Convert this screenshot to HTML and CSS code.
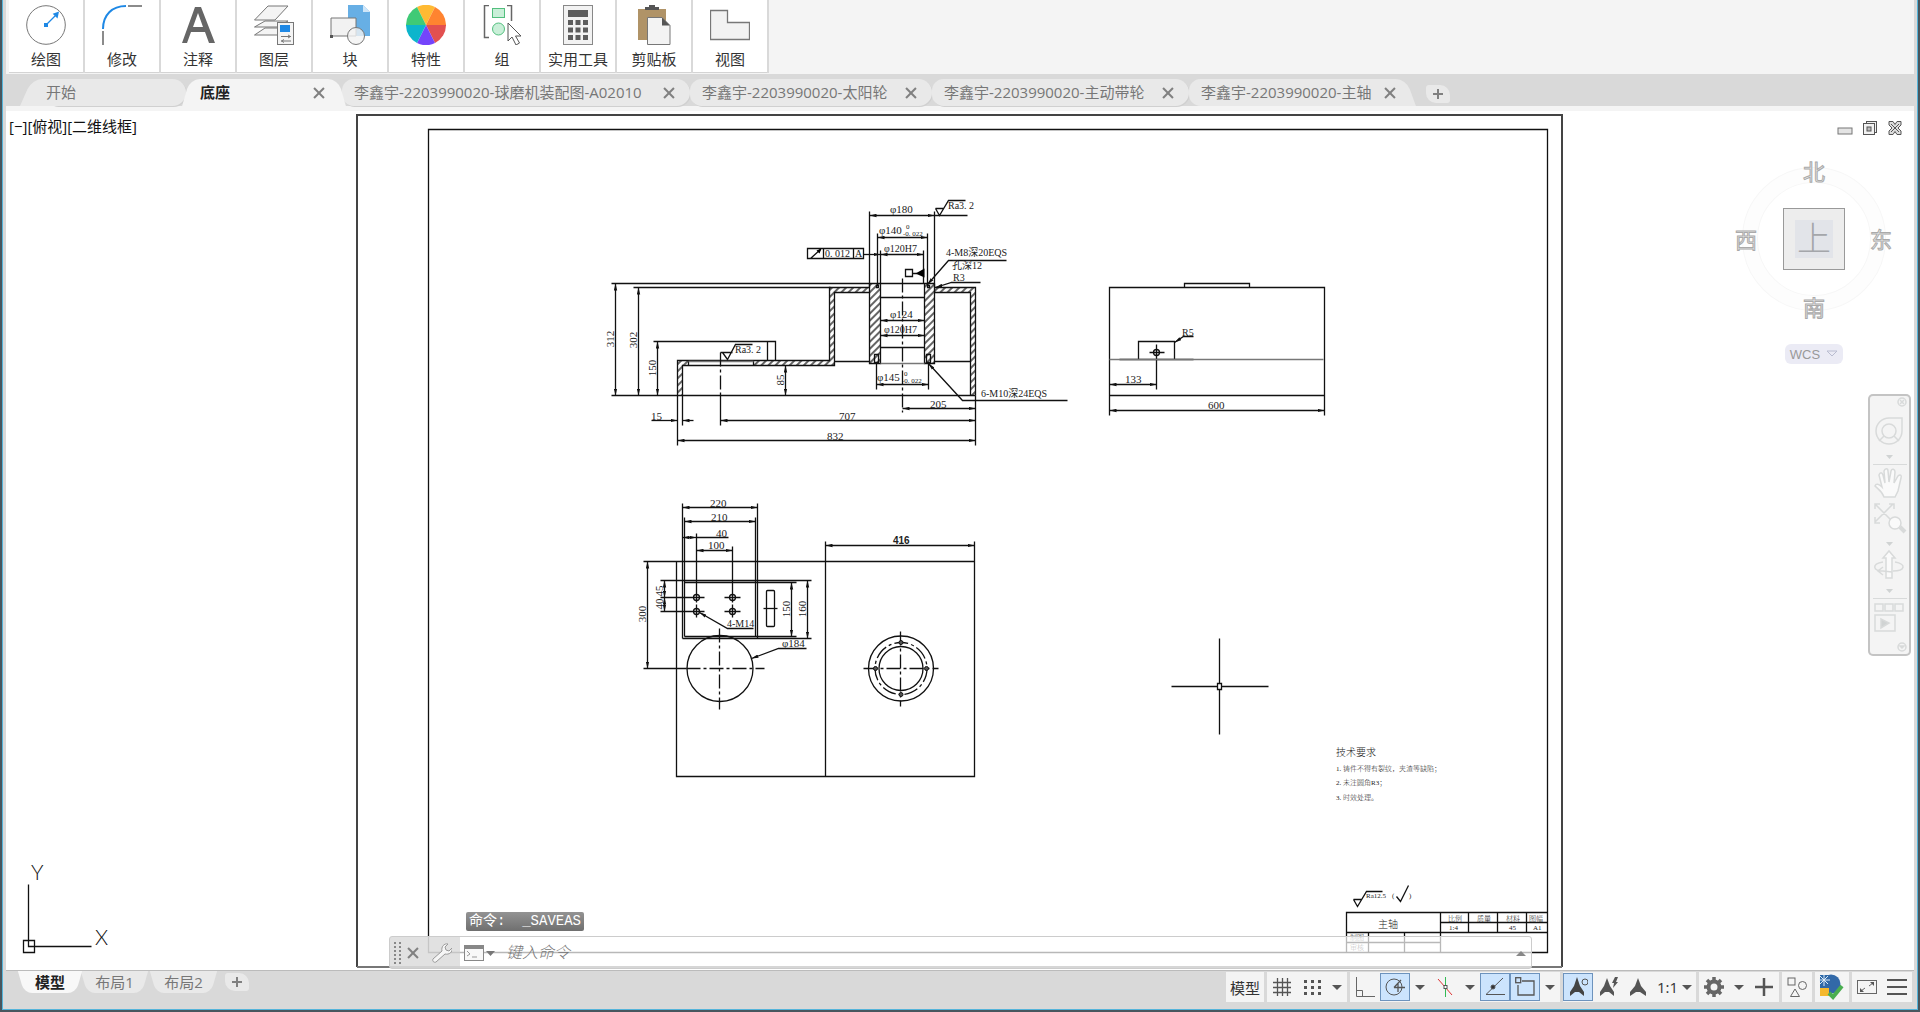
FILE: index.html
```html
<!DOCTYPE html>
<html lang="zh-CN">
<head>
  <meta charset="utf-8">
  <meta name="viewport" content="width=device-width">
  <title>底座</title>
  <link rel="stylesheet" href="styles.css">
</head>
<body>
<div class="window">

  <!-- ribbon -->
  <header class="ribbon">
    <button class="panel">
      <svg width="40" height="40" viewBox="0 0 40 40"><circle cx="20" cy="20" r="19.3" fill="#fff" stroke="#777"/><path d="M20 20L30 10" stroke="#1e88e5" stroke-width="1.3"/><path d="M33 6.5l-1.5 7-4.800-4.800z" fill="#1e88e5"/><rect x="18" y="18" width="4" height="4" fill="#1e88e5"/></svg>
      <span>绘图</span>
    </button>
    <button class="panel">
      <svg width="40" height="40" viewBox="0 0 40 40"><path d="M1 24C1 10 10 1 24 1" fill="none" stroke="#1e88e5" stroke-width="2"/><path d="M1 26v14M26 1h14" stroke="#666" stroke-width="1.500"/></svg>
      <span>修改</span>
    </button>
    <button class="panel">
      <svg width="40" height="40" viewBox="0 0 40 40"><path d="M17 2h6l14 36h-6l-4-11H13L9 38H4zM20 8l-5 14h10z" fill="#666" fill-rule="evenodd"/></svg>
      <span>注释</span>
    </button>
    <button class="panel">
      <svg width="40" height="40" viewBox="0 0 40 40" fill="#f4f4f4" stroke="#777"><path d="M11 23h23L23 30H.500zM11 16h23L23 22H.500z"/><path d="M14 1h20L21 15H.500z"/><rect x="23.500" y="17.500" width="16" height="22"/><rect x="26" y="20" width="10" height="7" fill="#1e88e5" stroke="none"/><path d="M27 31.500h10M27 36h10M34 30l2.500 1.500L34 33M30 34.500L27.500 36l2.500 1.500" fill="none"/></svg>
      <span>图层</span>
    </button>
    <button class="panel">
      <svg width="40" height="40" viewBox="0 0 40 40"><path d="M18 0h15l7 7v24H18z" fill="#67afe5"/><path d="M33 0v7h7z" fill="#cfe6f8"/><path d="M1 13h25v18H1z" fill="#f2f2f2" stroke="#777"/><path d="M0 30h3v3H0z" fill="#555"/><circle cx="26" cy="31" r="8.500" fill="#f2f2f2" fill-opacity=".8" stroke="#777"/></svg>
      <span>块</span>
    </button>
    <button class="panel">
      <svg width="40" height="40" viewBox="0 0 40 40"><path d="M20 20L11 2A20 20 0 0 1 29 2z" fill="#ffba33"/><path d="M20 20l9-18A20 20 0 0 1 40 20z" fill="#ff8430"/><path d="M20 20h20a20 20 0 0 1-11 18z" fill="#e25050"/><path d="M20 20l9 18a20 20 0 0 1-18 0z" fill="#7444fb"/><path d="M20 20l-9 18A20 20 0 0 1 0 20z" fill="#0db5cc"/><path d="M20 20H0A20 20 0 0 1 11 2z" fill="#3fca76"/></svg>
      <span>特性</span>
    </button>
    <button class="panel">
      <svg width="40" height="40" viewBox="0 0 40 40" fill="none"><path d="M7 .500H2.500v32H7M25 .500h4.500V16" stroke="#666" stroke-width="1.500"/><g fill="#c9efd8" stroke="#52bf7e"><rect x="10.500" y="3.500" width="12" height="9"/><circle cx="16.500" cy="24" r="6"/></g><path d="M26 18v18l4-4 4 8 3.500-2-4-7H39z" fill="#fff" stroke="#555"/></svg>
      <span>组</span>
    </button>
    <button class="panel">
      <svg width="40" height="40" viewBox="0 0 40 40" fill="#5c5c5c"><rect x="5.500" y=".500" width="29" height="39" fill="#f2f2f2" stroke="#888"/><path d="M10 5h20v7H10zM10 15h5v5h-5zM17.500 15h5v5h-5zM25 15h5v5h-5zM10 22.500h5v5h-5zM17.500 22.500h5v5h-5zM25 22.500h5v5h-5zM10 30h5v5h-5zM17.500 30h5v5h-5zM25 30h5v5h-5z"/></svg>
      <span>实用工具</span>
    </button>
    <button class="panel">
      <svg width="40" height="40" viewBox="0 0 40 40"><path d="M4 4h28v31H4z" fill="#b09367"/><path d="M11 5V2h4V0h6v2h4v3z" fill="#555"/><path d="M13.500 12.500H28l8 8v19H13.500z" fill="#f3f3f3" stroke="#777"/><path d="M28 12.500v8h8z" fill="#555"/></svg>
      <span>剪贴板</span>
    </button>
    <button class="panel">
      <svg width="40" height="40" viewBox="0 0 40 40"><path d="M.500 5.500h17v12h22v17H.500z" fill="#f2f2f2" stroke="#777" stroke-width="1.300"/></svg>
      <span>视图</span>
    </button>
  </header>

  <!-- document tabs -->
  <nav class="file-tabs">
    <div class="tab tab-start"><span>开始</span></div>
    <div class="tab tab-active"><span>底座</span><button class="close" aria-label="关闭"></button></div>
    <div class="tab tab-wide"><span>李鑫宇-2203990020-球磨机装配图-A02010</span><button class="close" aria-label="关闭"></button></div>
    <div class="tab tab-sun"><span>李鑫宇-2203990020-太阳轮</span><button class="close" aria-label="关闭"></button></div>
    <div class="tab tab-wheel"><span>李鑫宇-2203990020-主动带轮</span><button class="close" aria-label="关闭"></button></div>
    <div class="tab tab-shaft"><span>李鑫宇-2203990020-主轴</span><button class="close" aria-label="关闭"></button></div>
    <button class="tab-add" aria-label="新图形"></button>
  </nav>

  <!-- model space -->
  <main class="canvas">
    <svg class="drawing" viewBox="6 111 1908 859">
      <defs>
        <marker id="arrow" viewBox="0 0 7 4" markerWidth="7" markerHeight="4" markerUnits="userSpaceOnUse" refX="7" refY="2" orient="auto-start-reverse"><path d="M0 .3L7 2 0 3.700z" fill="#111"/></marker>
        <pattern id="hatch" width="5" height="5" patternUnits="userSpaceOnUse" patternTransform="rotate(45)"><path d="M1 0v5" stroke="#111" stroke-width="1.300"/></pattern>
      </defs>

      <!-- sheet border -->
      <path class="border" d="M357 967V115H1562V967"/>
      <path class="border border-low" d="M357 967H1562"/>

      <g transform="translate(.5 .5)">
        <path class="ln" d="M428 129H1547V952H428z"/>

        <!-- section view -->
        <path class="ln" d="M611 283H934M633 287H830M611 395H975M653 341H775V360M767 341V360"/>
        <path fill="url(#hatch)" d="M677 360H688V365H682V395H677zM753 360H829V287H869V283H880V363H869V292H834V365H753zM924 283H934V287H975V395H970V292H934V363H924z"/>
        <path class="ln" d="M677 395V360H829V287H869V363H880V283M682 395V365H834V292H869M688 360V365M753 360V365M869 283V287M924 283V363H934V283M934 287H975V395M970 395V292H934M834 361H869M934 361H970M880 297H924M880 347H924"/>
        <path class="ln soft" d="M880 363H924M688 361H753"/>
        <path class="ln" d="M874 354h4v8h-4zM926 354h4v8h-4zM876 285h2v2h-2zM927 285h2v2h-2z"/>
        <path class="ln center" d="M902 278V412"/>
        <path class="ln center" d="M720 352V395"/>
        <path class="ln" d="M869 211V287M934 211V287M877 233V285M927 233V285M880 250V283M923 250V283M876 363V389M928 363V389M677 395V445M682 395V425M720 395V425M975 395V445M934 215H967"/>
        <path class="dim" d="M869 215H934"/>
        <path class="dim" d="M877 237H927"/>
        <path class="dim" d="M880 254H923"/>
        <path class="dim" d="M880 320H924"/>
        <path class="dim" d="M880 335H924"/>
        <path class="dim" d="M876 384H928"/>
        <path class="dim" d="M902 408H975"/>
        <path class="dim" d="M720 420H975"/>
        <path class="dim" d="M677 440H975"/>
        <path class="dim" d="M615 283V395"/>
        <path class="dim" d="M638 287V395"/>
        <path class="dim" d="M657 341V395"/>
        <path class="dim" d="M785 365V395"/>
        <path class="lead" d="M651 420H677"/>
        <path class="lead" d="M693 420H682"/>
        <path class="lead" d="M863 254H880"/>
        <path class="lead" d="M1006 260H948L927 284"/>
        <path class="lead" d="M980 282H951L935 287"/>
        <path class="lead" d="M1067 400H962L928 363"/>
        <path class="ln" d="M807 248H863V258H807zM823 248V258M853 248V258M810 258L820 249M905 269h7v7h-7zM912 273h5"/>
        <path d="M924 268V277L915 273zM821 248l-5 2 3 3z"/>
        <path class="ln" d="M720 352H732M722 352L727 359 735 344H752M935 208H943M935 208L939 215 948 200H965"/>

        <!-- side view -->
        <path class="ln" d="M1109 415V287H1324V415M1109 395H1324M1184 287V283H1249V287M1138 359V341H1174V359M1119 359H1193M1156 344V389M1149 352H1164"/>
        <path class="ln soft" d="M1109 359H1323"/>
        <circle class="ln" cx="1156" cy="352" r="3"/>
        <path class="dim" d="M1109 384H1156"/>
        <path class="dim" d="M1109 410H1324"/>
        <path class="lead" d="M1193 336H1183L1174 342"/>

        <!-- plan view -->
        <path class="ln" d="M676 561H974V776H676zM825 541V776M974 541V561M682 503V638M757 503V638M684 517V636M755 517V636M696 533V602M732 546V602M660 580H811M684 582H796M684 636H796M682 638H811M660 597H704M660 611H704M724 597H740M724 611H740M696 604V617M732 604V617M643 561H676M643 668H686"/>
        <rect class="ln" x="766" y="590" width="8" height="36" rx="1"/>
        <path class="ln center" d="M763 608H779"/>
        <path class="dim" d="M682 507H757"/>
        <path class="dim" d="M684 521H755"/>
        <path class="dim" d="M682 537H696"/>
        <path class="ln" d="M696 537H728"/>
        <path class="dim" d="M696 550H732"/>
        <path class="dim" d="M825 545H974"/>
        <path class="dim" d="M647 561V668"/>
        <path class="dim" d="M664 580V597"/>
        <path class="dim" d="M664 597V611"/>
        <path class="dim" d="M791 582V636"/>
        <path class="dim" d="M807 580V638"/>
        <path class="lead" d="M753 628H727L699 612"/>
        <path class="lead" d="M806 648H778L751 658"/>
        <g class="ln">
          <circle cx="696" cy="597" r="3"/><circle cx="732" cy="597" r="3"/>
          <circle cx="696" cy="611" r="3"/><circle cx="732" cy="611" r="3"/>
          <circle cx="719.500" cy="668" r="33"/>
          <circle cx="900.500" cy="668" r="32.500"/><circle cx="900.500" cy="668" r="22"/>
        </g>
        <circle class="ln center" cx="900.500" cy="668" r="26"/>
        <path class="ln center" d="M686 668H764M719 628V709M863 668H938M900 631V706"/>
        <g class="hole">
          <circle cx="900.500" cy="642" r="2"/><circle cx="900.500" cy="694" r="2"/>
          <circle cx="875" cy="668" r="2"/><circle cx="926" cy="668" r="2"/>
        </g>

        <!-- cursor -->
        <path class="ln" d="M1171 686H1217M1221 686H1268M1219 638V683M1219 689V734M1217 683h4v6h-4z"/>

        <!-- title block -->
        <path class="ln" d="M1346 952V912H1547M1346 932H1547M1440 922H1547M1440 912V952M1468 912V932M1497 912V932M1526 912V932M1346 942H1440M1368 932V952M1404 932V952"/>
        <path class="ln" d="M1353 899H1361M1353 899L1357 906 1366 891H1382M1396 896L1400 901 1408 885"/>

        <!-- UCS -->
        <path class="ln" d="M28 884V946H91M23 940h11v12h-11z"/>
      </g>

      <g class="note">
        <text x="890" y="213">φ180</text>
        <text x="879" y="234">φ140</text>
        <text x="884" y="252" class="narrow">φ120H7</text>
        <text x="890" y="318">φ124</text>
        <text x="884" y="333" class="narrow">φ120H7</text>
        <text x="877" y="381">φ145</text>
        <text x="948" y="209" class="narrow">Ra3. 2</text>
        <text x="735" y="353" class="narrow">Ra3. 2</text>
        <text x="825" y="257" class="narrow">0. 012</text>
        <text x="855" y="257" class="narrow">A</text>
        <text x="946" y="256" class="narrow">4-M8深20EQS</text>
        <text x="952" y="269" class="narrow">孔深12</text>
        <text x="953" y="281" class="narrow">R3</text>
        <text x="981" y="397" class="narrow">6-M10深24EQS</text>
        <text x="930" y="408">205</text>
        <text x="839" y="420">707</text>
        <text x="827" y="440">832</text>
        <text x="651" y="420">15</text>
        <text x="1125" y="383">133</text>
        <text x="1208" y="409">600</text>
        <text x="1182" y="336" class="narrow">R5</text>
        <text x="710" y="507">220</text>
        <text x="711" y="521">210</text>
        <text x="716" y="537">40</text>
        <text x="708" y="549">100</text>
        <text x="727" y="627" class="narrow">4-M14</text>
        <text x="782" y="647">φ184</text>
        <text x="893" y="544" class="bold">416</text>
        <g class="turned">
          <text transform="translate(614 339) rotate(-90)">312</text>
          <text transform="translate(637 340) rotate(-90)">302</text>
          <text transform="translate(656 368) rotate(-90)">150</text>
          <text transform="translate(784 380) rotate(-90)">85</text>
          <text transform="translate(646 614) rotate(-90)">300</text>
          <text transform="translate(663 591) rotate(-90)">45</text>
          <text transform="translate(663 604) rotate(-90)">40</text>
          <text transform="translate(790 609) rotate(-90)">150</text>
          <text transform="translate(806 609) rotate(-90)">160</text>
        </g>
      </g>
      <g class="note tiny">
        <text x="906" y="229">0</text><text x="903" y="236">-0. 022</text>
        <text x="904" y="376">0</text><text x="902" y="383">-0. 022</text>
        <text x="1336" y="771">1. 铸件不得有裂纹，夹渣等缺陷；</text>
        <text x="1336" y="785">2. 未注圆角R3；</text>
        <text x="1336" y="800">3. 时效处理。</text>
        <text x="1366" y="898">Ra12.5</text><text x="1392" y="898">(</text><text x="1409" y="898">)</text>
        <text x="1448" y="921">比例</text><text x="1477" y="921">质量</text><text x="1506" y="921">材料</text><text x="1529" y="921">图幅</text>
        <text x="1449" y="930">1:4</text><text x="1509" y="930">45</text><text x="1533" y="930">A1</text>
        <text x="1350" y="940">制图</text><text x="1350" y="950">审核</text>
      </g>
      <g class="note kai">
        <text x="1336" y="756">技术要求</text>
        <text x="1378" y="928">主轴</text>
      </g>
      <text class="ucs" x="31" y="880">Y</text>
      <text class="ucs" x="95" y="945">X</text>
    </svg>

    <button class="view-label">[−][俯视][二维线框]</button>

    <div class="doc-controls">
      <button aria-label="最小化"><svg width="16" height="16"><rect x="1" y="8" width="14" height="6" fill="#e4e4e4" stroke="#777"/></svg></button>
      <button aria-label="还原"><svg width="16" height="16"><g fill="#f2f2f2" stroke="#555"><rect x="4.500" y="1.500" width="10" height="11"/><rect x="1.500" y="3.500" width="11" height="11"/><rect x="5" y="7" width="4" height="4" fill="#bbb"/></g></svg></button>
      <button aria-label="关闭"><svg width="16" height="16"><path d="M2 1.500h4l2 3 2-3h4V5l-3 3 3 3v3.500h-4l-2-3-2 3H2V11l3-3-3-3z" fill="#ddd" stroke="#555"/><path d="M4 4l8 8M12 4l-8 8" stroke="#555"/></svg></button>
    </div>

    <div class="viewcube">
      <svg width="158" height="158" viewBox="0 0 158 158">
        <circle cx="79" cy="79" r="64" fill="none" stroke="#f7f7f7" stroke-width="16"/>
        <circle cx="79" cy="79" r="64" fill="none" stroke="#fdfdfd" stroke-width="14"/>
        <rect x="48.500" y="48.500" width="61" height="61" fill="#ededed" stroke="#999"/>
        <rect x="60" y="60" width="38" height="38" fill="#e2e4e9"/>
        <g class="compass">
          <text x="79" y="20">北</text><text x="11" y="88">西</text>
          <text x="146" y="88">东</text><text x="79" y="156">南</text>
        </g>
        <text class="face" x="79" y="91">上</text>
      </svg>
      <button class="wcs">WCS <svg width="12" height="8"><path d="M1 1h10L6 6z" fill="none" stroke="#b9bcd0"/></svg></button>
    </div>

    <div class="navbar">
      <svg width="43" height="262" viewBox="0 0 43 262" fill="none" stroke="#d8dada" stroke-width="1.500">
        <circle cx="34" cy="8" r="4"/><path d="M32 6l4 4M36 6l-4 4"/>
        <path d="M21 24h13v13a13 13 0 1 1-13-13z"/><circle cx="21" cy="37" r="7"/><path d="M16 42l-5 5M26 42l5 5"/>
        <path d="M5 70.500h34M5 204.500h34" stroke-width="1"/>
        <g fill="#d0d3d3" stroke="none"><path d="M18 61h7l-3.500 4zM18 148h7l-3.500 4zM18 195h7l-3.500 4z"/></g>
        <path d="M16 103c-2-6-6-8-9-11 1-3 4-2 7 1l-3-12c1-3 3-3 4 0l2 8-1-12c1-3 4-3 4 0l1 11 2-11c1-3 4-2 4 1l-1 11 4-7c2-2 4-1 3 2l-3 13-3 6z" fill="#fafafa"/>
        <path d="M7 110l18 18M7 128l18-18M7 115v-5h5M21 110h5v5M7 123v6h5"/><circle cx="27" cy="129" r="6" fill="#fafafa"/><path d="M32 133l5 5" stroke-width="4"/>
        <path d="M18 184v-20h-3l6-7 6 7h-3v20z" fill="#fafafa"/><path d="M15 168c-12 2-10 9 0 9l9 1M27 168c12 2 10 9-2 9M15 173l-5 4 5 4"/>
        <rect x="7" y="210" width="8" height="7"/><rect x="17" y="210" width="8" height="7"/><rect x="27" y="210" width="8" height="7"/>
        <rect x="7" y="221" width="20" height="16"/><path d="M13 225v9l8-5z" fill="#d0d3d3"/>
        <circle cx="34" cy="253" r="4"/><path d="M32 252h4l-2 2z"/>
      </svg>
    </div>

    <div class="history">命令: &nbsp;_SAVEAS</div>
    <div class="cmdline">
      <div class="cmd-grip">
        <svg width="8" height="22" fill="#888"><path d="M0 0h2v2H0zM5 0h2v2H5zM0 4h2v2H0zM5 4h2v2H5zM0 8h2v2H0zM5 8h2v2H5zM0 12h2v2H0zM5 12h2v2H5zM0 16h2v2H0zM5 16h2v2H5zM0 20h2v2H0zM5 20h2v2H5z"/></svg>
        <button class="close" aria-label="关闭"></button>
        <button aria-label="自定义"><svg width="20" height="20" viewBox="0 0 20 20"><path d="M1 16L10 8C9 4 12 0 16 1l-3 3 1 3 3 1 3-3c1 4-3 7-7 6l-9 8c-2 1-4-1-3-3z" fill="#f6f6f6" stroke="#999"/></svg></button>
      </div>
      <button class="cmd-recent" aria-label="最近使用的命令">
        <svg width="32" height="18"><rect x=".500" y="1.500" width="19" height="15" fill="#f8f8f8" stroke="#888"/><path d="M0 1h20v4H0z" fill="#888"/><path d="M3 7l3 3-3 2M8 13h5" fill="none" stroke="#999"/><path d="M22 7h9l-4.500 5z" fill="#777"/></svg>
      </button>
      <input class="cmd-input" type="text" placeholder="键入命令" aria-label="键入命令">
      <button class="cmd-up" aria-label="历史记录"><svg width="10" height="5"><path d="M0 5h10L5 0z" fill="#888"/></svg></button>
    </div>
  </main>

  <!-- layout tabs and status bar -->
  <footer class="bottom">
    <nav class="layout-tabs">
      <button class="layout layout-active">模型</button>
      <button class="layout">布局1</button>
      <button class="layout">布局2</button>
      <button class="layout-add" aria-label="新建布局"></button>
    </nav>
    <div class="status">
      <div class="group"><button class="st-model">模型</button></div>
      <div class="group">
        <button aria-label="栅格"><svg width="20" height="20"><path d="M5.500 1v18M10.500 1v18M15.500 1v18M1 5.500h18M1 10.500h18M1 15.500h18" stroke="#555" stroke-width="1.300"/></svg></button>
        <button aria-label="捕捉"><svg width="20" height="20" fill="#555"><path d="M2 3h3v3H2zM9 3h3v3H9zM16 3h3v3h-3zM2 9h3v3H2zM9 9h3v3H9zM16 9h3v3h-3zM2 15h3v3H2zM9 15h3v3H9zM16 15h3v3h-3z"/></svg></button>
        <button class="drop" aria-label="捕捉设置"></button>
      </div>
      <div class="group">
        <button aria-label="正交"><svg width="20" height="20" fill="none" stroke="#666"><path d="M1.500 0v19.500H20M1.500 13.500h6v6"/></svg></button>
        <button class="on" aria-label="极轴"><svg width="20" height="20" fill="none" stroke="#555"><circle cx="9" cy="10" r="8"/><path d="M9 10.500h11M9 10.500L16 3M13 6v9" stroke-width="1.300"/></svg></button>
        <button class="drop" aria-label="极轴设置"></button>
        <button aria-label="等轴测"><svg width="20" height="20" fill="none"><path d="M3 2l14 16" stroke="#d33"/><path d="M10.500 0v20" stroke="#3b5"/><rect x="9" y="8.500" width="3" height="3" fill="#fff" stroke="#555"/></svg></button>
        <button class="drop" aria-label="等轴测设置"></button>
        <button class="on" aria-label="对象捕捉追踪"><svg width="20" height="20" fill="none" stroke="#555"><path d="M18 1L1 17.500h19"/><circle cx="8" cy="10" r="2" fill="#333"/></svg></button>
        <button class="on" aria-label="对象捕捉"><svg width="20" height="20" fill="none" stroke="#555" stroke-width="1.300"><path d="M7 4h12v14H3V8"/><rect x="0.700" y=".700" width="5" height="5"/></svg></button>
        <button class="drop" aria-label="对象捕捉设置"></button>
      </div>
      <div class="group">
        <button class="on" aria-label="注释可见性"><svg width="20" height="20" fill="#444"><path d="M9 0l3 9 4 6v4l-5-4H7l-5 4v-4l4-6z"/><circle cx="17" cy="5" r="3" fill="none" stroke="#555"/></svg></button>
        <button aria-label="自动缩放"><svg width="20" height="20" fill="#555"><path d="M9 1l3 8 4 6v4l-5-4H7l-5 4v-4l4-6zM17 0l-3 6h2l-1 5 5-6h-2l2-5z"/></svg></button>
        <button aria-label="注释比例"><svg width="20" height="20" fill="#555"><path d="M10 1l3 8 5 6v4l-6-4H8l-6 4v-4l5-6z"/></svg></button>
        <button class="scale">1:1</button>
      </div>
      <div class="group">
        <button aria-label="切换工作空间"><svg width="20" height="20" viewBox="0 0 20 20"><circle cx="10" cy="10" r="5.500" fill="none" stroke="#666" stroke-width="4"/><path d="M10 0v4M10 16v4M0 10h4M16 10h4M3 3l3 3M14 14l3 3M3 17l3-3M14 6l3-3" stroke="#666" stroke-width="3.500"/></svg></button>
        <button class="drop" aria-label="工作空间"></button>
        <button aria-label="注释监视器"><svg width="20" height="20"><path d="M10 1v18M1 10h18" stroke="#555" stroke-width="2.500"/></svg></button>
      </div>
      <div class="group">
        <button aria-label="隔离对象"><svg width="22" height="22" fill="none" stroke="#666"><rect x="2" y="2" width="7" height="7"/><circle cx="16.500" cy="9.500" r="4"/><path d="M9 13l4.500 7.500h-9z"/></svg></button>
      </div>
      <div class="group">
        <button class="big" aria-label="图形性能"><svg width="26" height="26" viewBox="0 0 26 26"><path d="M1 1h8v13H1z" fill="#2d68a8"/><circle cx="12" cy="10" r="9.500" fill="#3269a8"/><path d="M1 14h9v8H1z" fill="#f5b82e"/><path d="M5 1v11M0 6h11M1 2l8 8M9 2l-8 8" stroke="#dcebf8"/><path d="M10 19l4 4 9-11" fill="none" stroke="#4aae50" stroke-width="4"/></svg></button>
      </div>
      <div class="group">
        <button aria-label="全屏显示"><svg width="20" height="20" fill="none" stroke="#666"><rect x=".500" y="3.500" width="19" height="13"/><path d="M12 9l4-3M8 11l-4 3"/><path d="M13 5h4v4zM3 11v4h4z" fill="#555" stroke="none"/></svg></button>
        <button aria-label="自定义"><svg width="20" height="20"><path d="M0 3h20M0 10h20M0 17h20" stroke="#555" stroke-width="2"/></svg></button>
      </div>
    </div>
  </footer>
</div>
</body>
</html>
```
FILE: styles.css
```css
* {
  box-sizing: border-box;
}

html, body {
  margin: 0;
  height: 100%;
}

body {
  background-color: #48565e;
  font-family: "Open Sans", "Noto Sans CJK SC", sans-serif;
  font-size: 15px;
  color: #333;
  overflow: hidden;
}

button {
  margin: 0;
  padding: 0;
  border: 0;
  background: transparent;
  font: inherit;
  color: inherit;
}

svg {
  display: block;
}

.window {
  display: flex;
  flex-direction: column;
  height: calc(100% - 2px);
  margin: 0 2px;
  padding: 0 3px;
  border: 1px solid #55b4da;
  border-top: 0;
  background-color: #d9d9d9;
}

/* ribbon */
.ribbon {
  display: flex;
  gap: 2px;
  height: 74px;
  flex: none;
  padding: 0 3px 1px;
  background-color: #f4f4f4;
}

.panel {
  display: flex;
  flex-direction: column;
  align-items: center;
  width: 74px;
  padding-top: 5px;
  background-color: #fff;
  border-bottom: 1px solid #d4d4d4;
  box-shadow: 2px 0 0 #d9d9d9;
}

.panel span {
  margin-top: 3px;
  line-height: 22px;
}

/* document tabs */
.file-tabs {
  display: flex;
  height: 37px;
  flex: none;
  padding: 5px 0 0 20px;
  background-color: #d9d9d9;
  border-bottom: 5px solid #f4f4f4;
}

.tab {
  position: relative;
  z-index: 0;
  display: flex;
  align-items: center;
  height: 27px;
  padding: 0 14px 0 12px;
  color: #777;
  line-height: 27px;
  white-space: nowrap;
}

.tab::before {
  content: "";
  position: absolute;
  z-index: -1;
  inset: 0;
  border-radius: 12px 14px 14px 12px;
  background-color: #e9e9e9;
  box-shadow: 1px 1px 0 #d0d0d0;
}

.tab-start {
  width: 160px;
  padding-left: 20px;
}

.tab-start::after,
.tab-active::after,
.tab-shaft::after {
  content: "";
  position: absolute;
  z-index: -1;
  top: 0;
  bottom: 0;
  background-color: inherit;
}

.tab-start::before {
  left: 20px;
}

.tab-start::after {
  left: 0;
  width: 60px;
  border-radius: 10px 0 0 0;
  background-color: #e9e9e9;
  transform: skewX(-24deg);
}

.tab-active {
  z-index: 1;
  width: 156px;
  padding-left: 14px;
  padding-right: 16px;
  color: #222;
  font-weight: bold;
}

.tab-active::before {
  right: 50%;
  background-color: #f4f4f4;
  border-radius: 10px 0 0 0;
  box-shadow: none;
  transform: skewX(-16deg);
}

.tab-active::after {
  left: 40%;
  right: 0;
  background-color: #f4f4f4;
  border-radius: 0 10px 0 0;
  transform: skewX(16deg);
}

.tab-wide {
  width: 348px;
}

.tab-sun {
  width: 242px;
}

.tab-wheel {
  width: 257px;
}

.tab-shaft {
  width: 230px;
  padding-right: 22px;
}

.tab-shaft::before {
  right: 40px;
  box-shadow: none;
}

.tab-shaft::after {
  right: 8px;
  width: 60px;
  border-radius: 0 10px 0 0;
  background-color: #e9e9e9;
  transform: skewX(20deg);
}

.close {
  position: relative;
  width: 14px;
  height: 14px;
  margin-left: auto;
}

.close::before,
.close::after {
  content: "";
  position: absolute;
  left: 0;
  top: 6px;
  width: 14px;
  height: 2px;
  background-color: #808080;
  transform: rotate(45deg);
}

.close::after {
  transform: rotate(-45deg);
}

.tab-add,
.layout-add {
  position: relative;
  width: 24px;
  height: 18px;
  margin: 6px 0 0 7px;
  border-radius: 3px 10px 3px 10px;
  background-color: #e9e9e9;
}

.tab-add::before,
.tab-add::after,
.layout-add::before,
.layout-add::after {
  content: "";
  position: absolute;
  left: 7px;
  top: 8px;
  width: 10px;
  height: 2px;
  background-color: #808080;
}

.tab-add::after,
.layout-add::after {
  transform: rotate(90deg);
}

/* model space */
.canvas {
  position: relative;
  flex: 1;
  min-height: 0;
  background-color: #fff;
}

.drawing {
  width: 100%;
  height: 100%;
}

.ln, .dim, .lead {
  fill: none;
  stroke: #111;
  stroke-width: 1.3;
}

.soft {
  stroke: #777;
}

.center {
  stroke-dasharray: 14 3 3 3;
}

.dim {
  marker-start: url(#arrow);
  marker-end: url(#arrow);
}

.lead {
  marker-end: url(#arrow);
}

.hole {
  fill: #555;
  stroke: #111;
}

.border {
  fill: none;
  stroke: #444;
  stroke-width: 2px;
}

.border-low {
  stroke: #777;
}

.note {
  font: 11px "Liberation Serif", "Noto Sans CJK SC", serif;
  fill: #222;
}

.note .narrow {
  font-size: 10px;
}

.note .bold {
  font: bold 10px "Liberation Sans", sans-serif;
}

.turned {
  text-anchor: middle;
}

.tiny {
  font-size: 7px;
  font-weight: 300;
}

.kai {
  font-size: 10px;
  font-weight: 300;
}

.ucs {
  font: 300 21px Lato, sans-serif;
  fill: #111;
}

.view-label {
  position: absolute;
  left: 3px;
  top: 4px;
  color: #111;
  line-height: 22px;
}

.doc-controls {
  position: absolute;
  right: 11px;
  top: 9px;
  display: flex;
  gap: 9px;
}

.viewcube {
  position: absolute;
  right: 21px;
  top: 49px;
  display: flex;
  flex-direction: column;
  align-items: center;
}

.viewcube svg {
  overflow: visible;
}

.compass {
  font: 22px "Noto Sans CJK SC", sans-serif;
  fill: #eee;
  stroke: #aaa;
  stroke-width: 1px;
  text-anchor: middle;
}

.face {
  font: 300 34px "Noto Sans CJK SC", sans-serif;
  fill: #a4a6aa;
  text-anchor: middle;
}

.wcs {
  display: flex;
  align-items: center;
  gap: 6px;
  height: 20px;
  margin-top: 26px;
  padding: 0 5px;
  border-radius: 6px;
  background-color: #ebebf5;
  color: #999;
  font: 13px "Liberation Sans", sans-serif;
}

.navbar {
  position: absolute;
  right: 3px;
  top: 283px;
  border-radius: 5px;
  background-color: #f4f4f4;
  box-shadow: inset 0 0 0 2px #c4c4c4;
}

.history {
  position: absolute;
  left: 460px;
  bottom: 39px;
  padding: 0 3px;
  border-radius: 2px;
  background: linear-gradient(#939393, #6f6f6f);
  color: #fff;
  font: 14px "Liberation Mono", "Noto Sans CJK SC", monospace;
  line-height: 19px;
}

.cmdline {
  position: absolute;
  left: 383px;
  right: 382px;
  bottom: 1px;
  display: flex;
  align-items: center;
  height: 33px;
  border: 1px solid #ccc;
  border-radius: 3px;
  background-color: rgba(255, 255, 255, 0.7);
}

.cmd-grip {
  display: flex;
  align-items: center;
  gap: 12px;
  width: 70px;
  height: 100%;
  padding-left: 4px;
  background-color: rgba(205, 205, 205, 0.6);
}

.cmd-grip .close {
  margin: 0 0 0 -8px;
}

.cmd-recent {
  margin-left: 4px;
}

.cmd-input {
  flex: 1;
  height: 31px;
  padding: 0 10px 2px;
  border: 0;
  outline: 0;
  background: transparent;
  font: italic 300 16px "Open Sans", "Noto Sans CJK SC", sans-serif;
}

.cmd-input::placeholder {
  color: #777;
}

.cmd-up {
  padding: 2px 5px 0;
}

/* bottom bar */
.bottom {
  display: flex;
  justify-content: space-between;
  height: 39px;
  flex: none;
  padding: 0 2px 0 16px;
  border-top: 1px solid #bbb;
}

.layout-tabs {
  display: flex;
}

.layout {
  position: relative;
  z-index: 0;
  width: 69px;
  height: 22px;
  color: #777;
  line-height: 20px;
}

.layout::before,
.layout::after {
  content: "";
  position: absolute;
  z-index: -1;
  top: 0;
  bottom: 0;
  left: 4px;
  right: 40%;
  border-radius: 0 0 0 8px;
  background-color: #e9e9e9;
  transform: skewX(16deg);
}

.layout::after {
  left: 40%;
  right: 4px;
  border-radius: 0 0 8px 0;
  transform: skewX(-16deg);
}

.layout-active {
  z-index: 1;
  width: 56px;
  margin-right: 2px;
  color: #222;
  font-weight: bold;
}

.layout-active::before {
  left: -1px;
  background-color: #f8f8f8;
}

.layout-active::after {
  right: -1px;
  background-color: #f8f8f8;
}

.layout-add {
  margin: 2px 0 0 7px;
}

.status {
  display: flex;
  gap: 3px;
  padding-top: 1px;
}

.group {
  display: flex;
  height: 30px;
  background-color: #f4f4f4;
}

.group button {
  display: flex;
  align-items: center;
  justify-content: center;
  width: 30px;
  height: 28px;
  margin-top: 1px;
}

.group .on {
  background-color: #cce4fd;
  border: 1px solid #6d93bd;
}

.group .st-model {
  width: 38px;
}

.group .big {
  width: 34px;
}

.group .drop {
  width: 20px;
}

.drop::after,
.scale::after {
  content: "";
  border: 5px solid transparent;
  border-top-color: #555;
  border-bottom: 0;
}

.group .scale {
  gap: 4px;
  width: 43px;
}
```
